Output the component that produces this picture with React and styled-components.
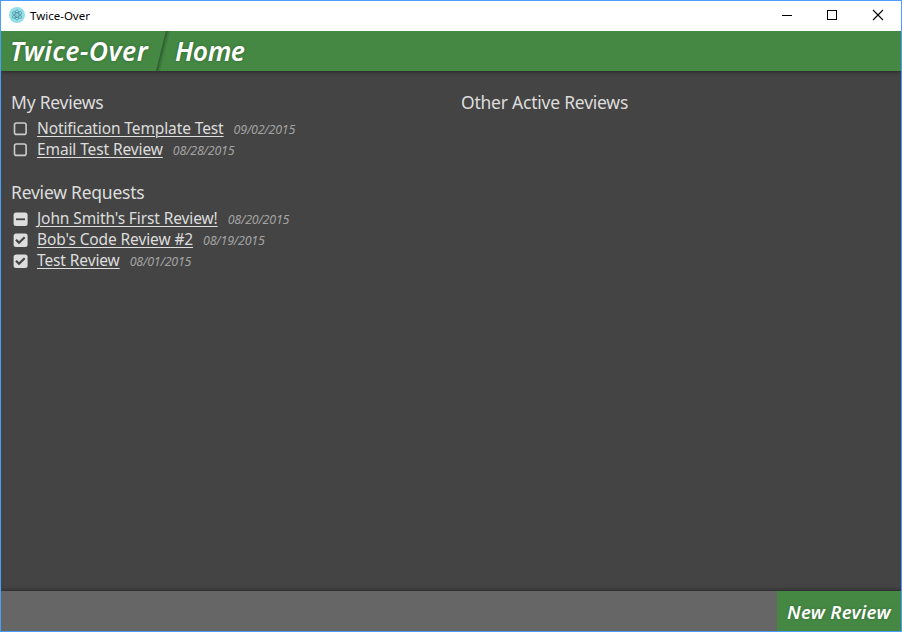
import React from "react";
import styled, { createGlobalStyle } from "styled-components";

const GlobalStyle = createGlobalStyle`
  * { box-sizing: border-box; }
  body { margin: 0; overflow: hidden; }
`;

const Window = styled.div`
  display: flex;
  flex-direction: column;
  width: 902px;
  height: 632px;
  border: 1px solid #4a9df8;
  background: #444;
  color: #ddd;
  font-family: "Noto Sans", "Open Sans", sans-serif;
`;

const TitleBar = styled.div`
  display: flex;
  align-items: center;
  height: 30px;
  flex: none;
  padding-left: 8px;
  background: #fff;
  color: #000;
`;

const AppIcon = styled.svg`
  width: 16px;
  height: 16px;
  margin-top: -2px;
`;

const WindowTitle = styled.span`
  flex: 1;
  margin-left: 5px;
  font-size: 11.5px;
  line-height: 28px;
`;

const WindowButton = styled.svg`
  width: 46px;
  height: 30px;
  fill: none;
  stroke: #000;
`;

const Header = styled.header`
  display: flex;
  height: 40px;
  flex: none;
  padding-left: 9px;
  background: #484;
  color: #fff;
  box-shadow: 0 0 5px rgba(0, 0, 0, 0.6);
  clip-path: inset(0 0 -8px 0);
  font-style: italic;
  font-weight: 600;
  white-space: nowrap;
`;

const Crumb = styled.span`
  width: ${(p) => p.$width}px;
  font-size: 26.5px;
  line-height: 41px;
  letter-spacing: ${(p) => p.$spacing}px;
  text-shadow: 0 0 3px rgba(0, 0, 0, 0.25);
`;

const Divider = styled.i`
  width: 5px;
  height: 40px;
  margin: 0 9px 0 12px;
  transform: skewX(-14deg);
  background: linear-gradient(90deg, #2b572b, #397439 45%, #484);
`;

const Content = styled.main`
  display: grid;
  grid-template-columns: 450px 1fr;
  flex: 1;
  padding: 19px 10px 0;
`;

const Section = styled.section`
  margin-bottom: 20px;
`;

const Heading = styled.h2`
  margin: 0;
  height: 28px;
  font-size: 17.5px;
  font-weight: 400;
  line-height: 24px;
  letter-spacing: -0.23px;
  white-space: nowrap;
`;

const Row = styled.div`
  display: flex;
  align-items: center;
  height: 21px;
  white-space: nowrap;
`;

const StatusIcon = styled.svg`
  width: 15px;
  height: 15px;
  margin: 1px 9px 0 2px;
  flex: none;
`;

const ReviewLink = styled.a`
  color: #ddd;
  font-size: 15.5px;
  line-height: 21px;
  letter-spacing: -0.11px;
  text-decoration: underline;
  text-decoration-thickness: 1px;
  text-underline-offset: 2px;
`;

const ReviewDate = styled.span`
  margin: 2px 0 0 10px;
  color: #a2a2a2;
  font-size: 12.5px;
  font-style: italic;
  line-height: 19px;
  letter-spacing: -0.25px;
`;

const Footer = styled.footer`
  display: flex;
  justify-content: flex-end;
  height: 40px;
  flex: none;
  background: #666;
  box-shadow: 0 0 5px rgba(0, 0, 0, 0.6);
  clip-path: inset(-8px 0 0 0);
`;

const NewReviewButton = styled.button`
  width: 124px;
  padding: 2px 0 0 10px;
  border: 0;
  background: #484;
  color: #fff;
  font: italic 600 18.5px/38px "Noto Sans", sans-serif;
  letter-spacing: 0.3px;
  text-align: left;
  white-space: nowrap;
  text-shadow: 0 0 3px rgba(0, 0, 0, 0.2);
`;

function Status({ kind }) {
  return (
    <StatusIcon viewBox="0 0 15 15">
      {kind === "open" ? (
        <rect x="1.5" y="1" width="11.6" height="11.4" rx="2" fill="none" stroke="#ccc" strokeWidth="1.6" />
      ) : (
        <rect x="0.6" y="0.4" width="14" height="13.7" rx="2.5" fill="#ddd" />
      )}
      {kind === "partial" && <path d="M3 7.3h9" stroke="#444" strokeWidth="1.8" />}
      {kind === "done" && <path d="M3 6.8l3 3 5.7-5.5" fill="none" stroke="#444" strokeWidth="2.2" />}
    </StatusIcon>
  );
}

const myReviews = [
  { name: "Notification Template Test", date: "09/02/2015", kind: "open" },
  { name: "Email Test Review", date: "08/28/2015", kind: "open" },
];

const requests = [
  { name: "John Smith's First Review!", date: "08/20/2015", kind: "partial" },
  { name: "Bob's Code Review #2", date: "08/19/2015", kind: "done" },
  { name: "Test Review", date: "08/01/2015", kind: "done" },
];

function ReviewSection({ title, items }) {
  return (
    <Section>
      <Heading>{title}</Heading>
      {items.map((r) => (
        <Row key={r.name}>
          <Status kind={r.kind} />
          <ReviewLink>{r.name}</ReviewLink>
          <ReviewDate>{r.date}</ReviewDate>
        </Row>
      ))}
    </Section>
  );
}

export default function App() {
  return (
    <>
      <GlobalStyle />
      <Window>
        <TitleBar>
          <AppIcon viewBox="0 0 16 16">
            <circle cx="8" cy="8" r="8" fill="#93dfea" />
            <g fill="none" stroke="#47848f" strokeWidth="0.6">
              <ellipse cx="8" cy="8" rx="5.2" ry="2" transform="rotate(30 8 8)" />
              <ellipse cx="8" cy="8" rx="5.2" ry="2" transform="rotate(90 8 8)" />
              <ellipse cx="8" cy="8" rx="5.2" ry="2" transform="rotate(150 8 8)" />
            </g>
            <circle cx="8" cy="8" r="0.6" fill="#47848f" />
          </AppIcon>
          <WindowTitle>Twice-Over</WindowTitle>
          <WindowButton viewBox="0 0 46 30"><path d="M19 14.5h10" /></WindowButton>
          <WindowButton viewBox="0 0 46 30"><rect x="18.5" y="9.5" width="9" height="9" /></WindowButton>
          <WindowButton viewBox="0 0 46 30"><path d="M18 9l10 10M28 9l-10 10" strokeWidth="1.1" /></WindowButton>
        </TitleBar>
        <Header>
          <Crumb $width={139} $spacing={0.45}>Twice-Over</Crumb>
          <Divider />
          <Crumb $width={72} $spacing={-0.5}>Home</Crumb>
        </Header>
        <Content>
          <div>
            <ReviewSection title="My Reviews" items={myReviews} />
            <ReviewSection title="Review Requests" items={requests} />
          </div>
          <Heading>Other Active Reviews</Heading>
        </Content>
        <Footer>
          <NewReviewButton>New Review</NewReviewButton>
        </Footer>
      </Window>
    </>
  );
}
